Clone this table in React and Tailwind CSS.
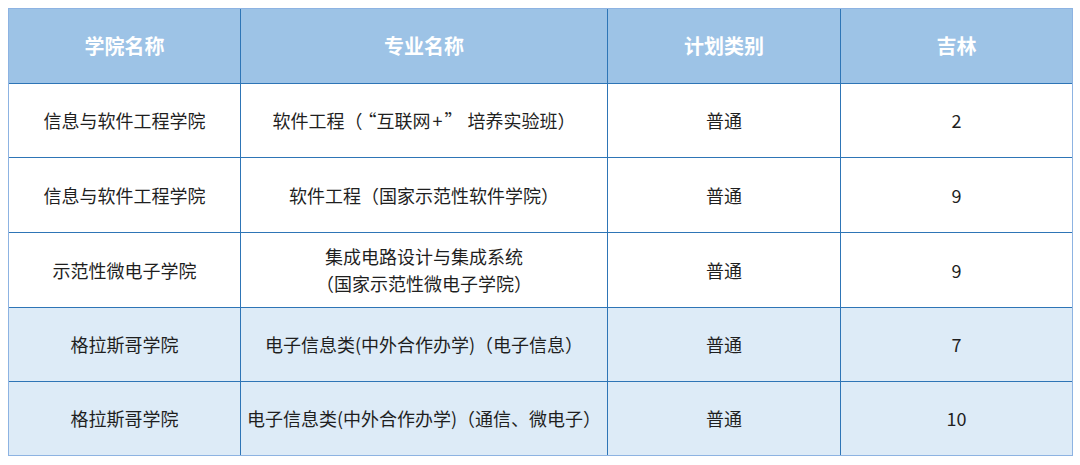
const rows = [
  { college: '信息与软件工程学院', major: [['软件工程（', <span key="q1" className="ml-[5px]">“</span>, '互联网', <span key="p" className="mx-[2px]">+</span>, <span key="q2" className="mr-[5px]">”</span>, '培养实验班）']], type: '普通', num: '2', shade: false, h: 'h-[74px]' },
  { college: '信息与软件工程学院', major: ['软件工程（国家示范性软件学院）'], type: '普通', num: '9', shade: false, h: 'h-[75px]' },
  { college: '示范性微电子学院', major: ['集成电路设计与集成系统', '（国家示范性微电子学院）'], type: '普通', num: '9', shade: false, h: 'h-[75px]' },
  { college: '格拉斯哥学院', major: ['电子信息类(中外合作办学)（电子信息）'], type: '普通', num: '7', shade: true, h: 'h-[74px]' },
  { college: '格拉斯哥学院', major: ['电子信息类(中外合作办学)（通信、微电子）'], type: '普通', num: '10', shade: true, h: 'h-[74px]' },
];

const headers = ['学院名称', '专业名称', '计划类别', '吉林'];

export default function App() {
  return (
    <div
      className="w-[1080px] h-[465px] bg-white pt-[8px] pl-[8px]"
      style={{ fontFamily: '"Noto Sans CJK SC", "Liberation Sans", sans-serif' }}
    >
      <div className="w-[1065px] border border-[#8db3e2]">
        <div className="grid grid-cols-[231px_367px_233px_1fr] h-[74px] bg-[#9dc3e6]">
          {headers.map((h, i) => (
            <div
              key={i}
              className={`flex items-center justify-center text-white font-bold text-[20px] ${i > 0 ? 'border-l border-[#2e75b6]' : ''}`}
            >
              {h}
            </div>
          ))}
        </div>
        {rows.map((r, idx) => (
          <div
            key={idx}
            className={`grid grid-cols-[231px_367px_233px_1fr] ${r.h} border-t border-[#2e75b6] text-[18px] text-[#1f1f1f] ${r.shade ? 'bg-[#ddebf7]' : 'bg-white'}`}
          >
            <div className="flex items-center justify-center">{r.college}</div>
            <div className="flex flex-col items-center justify-center border-l border-[#2e75b6] leading-[27px]">
              {r.major.map((m, j) => (
                <span key={j}>{m}</span>
              ))}
            </div>
            <div className="flex items-center justify-center border-l border-[#2e75b6]">{r.type}</div>
            <div className="flex items-center justify-center border-l border-[#2e75b6]">{r.num}</div>
          </div>
        ))}
      </div>
    </div>
  );
}
